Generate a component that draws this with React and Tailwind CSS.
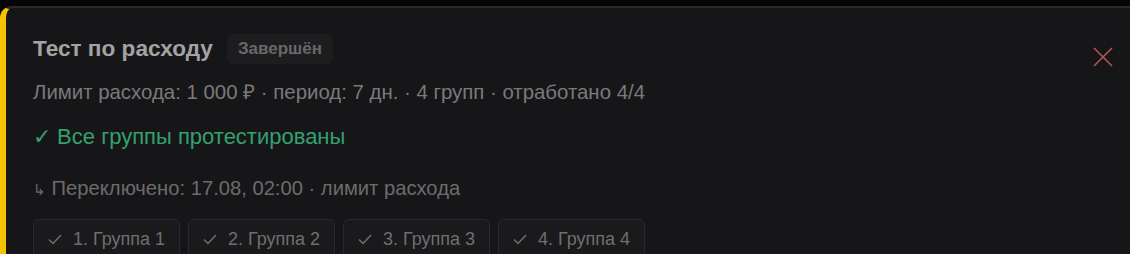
import React from 'react';

const GROUPS = ['1. Группа 1', '2. Группа 2', '3. Группа 3', '4. Группа 4'];

const App = () => {
  return (
    <div
      className="h-[254px] w-[1130px] overflow-hidden bg-[#060606] pt-[6px]"
      style={{ fontFamily: '"Liberation Sans", Arial, sans-serif' }}
    >
      <div className="relative h-[260px] w-[1140px] rounded-tl-[12px] border-t-2 border-l-[6px] border-t-[#2a2a2c] border-l-[#f5c400] bg-[#161618] pl-[27px] pt-[25px]">
        {/* Заголовок */}
        <div className="flex h-[31px] items-center">
          <h2 className="text-[22.6px] leading-[28px] font-bold text-[#a3a3a3]">Тест по расходу</h2>
          <span className="ml-[14px] flex h-[30px] items-center rounded-[6px] bg-[#1d1d1f] px-[11px] text-[17px] font-bold text-[#686868]">
            Завершён
          </span>
        </div>

        <button className="absolute right-[26px] top-[38px] text-[#b05656]">
          <svg width="22" height="22" viewBox="0 0 22 22" fill="none" stroke="currentColor" strokeWidth="1.6">
            <path d="M2 2L20 20M20 2L2 20" />
          </svg>
        </button>

        <p className="mt-[16px] text-[20.4px] leading-[24px] text-[#7a7a7a]">
          Лимит расхода: 1 000 ₽ · период: 7 дн. · 4 групп · отработано 4/4
        </p>

        <p className="mt-[19px] text-[22px] leading-[28px] text-[#34a070]">✓ Все группы протестированы</p>

        <p className="mt-[25px] text-[20.2px] leading-[24px] text-[#6c6c6c]">
          <span className="text-[15px]">↳</span> Переключено: 17.08, 02:00 · лимит расхода
        </p>

        <div className="mt-[17px] flex gap-[8px]">
          {GROUPS.map((g) => (
            <div
              key={g}
              className="flex h-[40px] w-[147px] items-center justify-center gap-[11px] rounded-[6px] border border-[#2a2a2c] bg-[#1a1a1c] text-[18px] text-[#6f6f6f]"
            >
              <svg width="14" height="11" viewBox="0 0 14 11" fill="none" stroke="currentColor" strokeWidth="1.5">
                <path d="M1 5.5L5 9.5L13 1" />
              </svg>
              <span>{g}</span>
            </div>
          ))}
        </div>
      </div>
    </div>
  );
};

export default App;
